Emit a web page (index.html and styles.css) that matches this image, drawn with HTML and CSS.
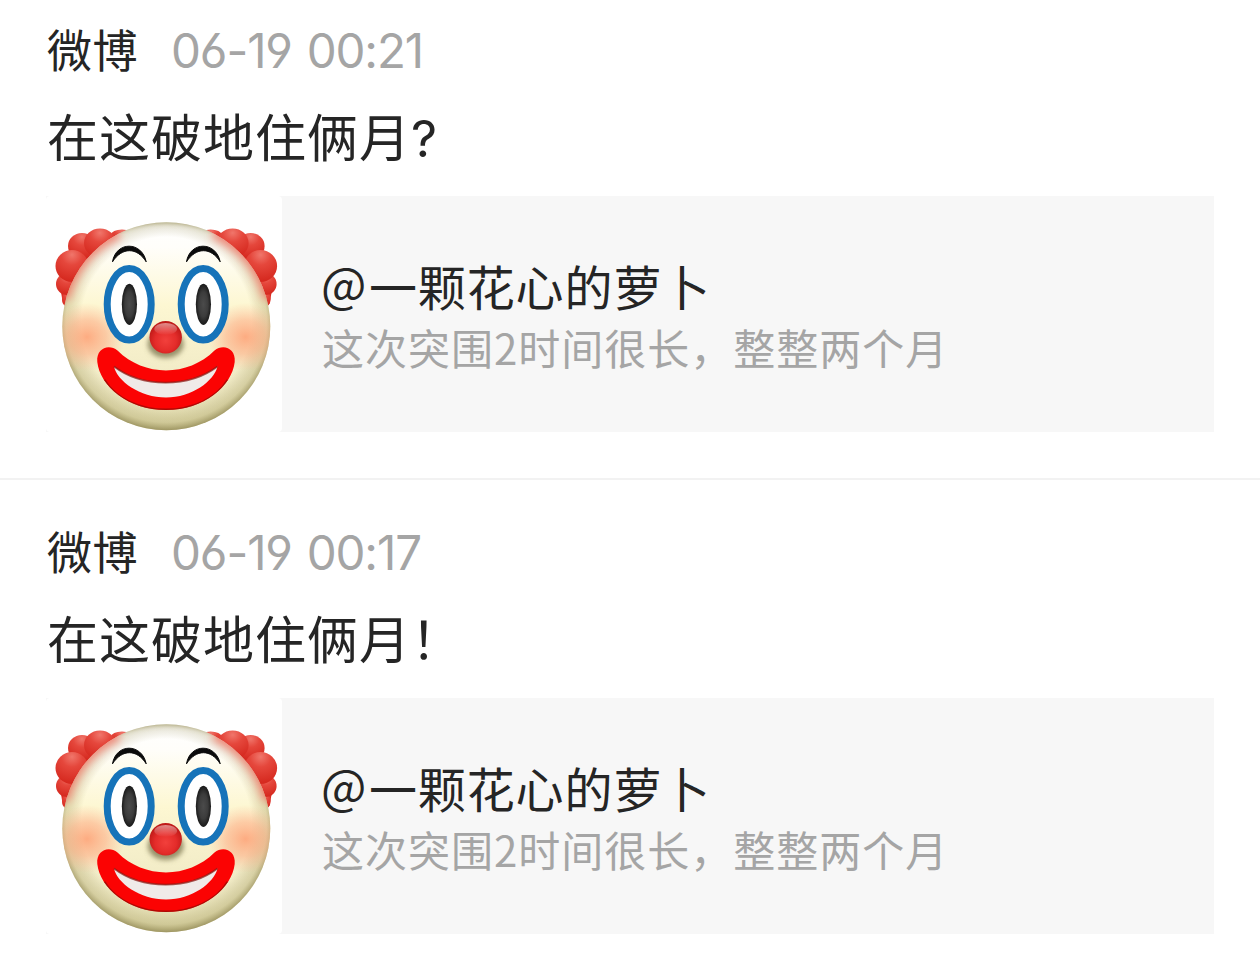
FILE: index.html
```
<!DOCTYPE html>
<html lang="zh-CN">

<head>
    <meta charset="UTF-8">
    <meta name="viewport" content="width=device-width, initial-scale=1.0">
    <title>微博</title>
    <link rel="stylesheet" href="styles.css">
</head>

<body>
    <!-- Shared clown avatar -->
    <svg class="defs" width="0" height="0" aria-hidden="true">
        <defs>
            <linearGradient id="skin" x1="0" y1="0" x2="0" y2="1">
                <stop offset="0" stop-color="#ffffff"/>
                <stop offset="0.12" stop-color="#fffefa"/>
                <stop offset="0.4" stop-color="#fdf7d2"/>
                <stop offset="0.75" stop-color="#f1ebc6"/>
                <stop offset="1" stop-color="#e4deb0"/>
            </linearGradient>
            <radialGradient id="rim" gradientUnits="userSpaceOnUse" cx="120.3" cy="126" r="109">
                <stop offset="0.78" stop-color="#8d8350" stop-opacity="0"/>
                <stop offset="0.92" stop-color="#a0975c" stop-opacity="0.32"/>
                <stop offset="1" stop-color="#857c48" stop-opacity="0.8"/>
            </radialGradient>
            <radialGradient id="blush">
                <stop offset="0" stop-color="#ff9468" stop-opacity="0.75"/>
                <stop offset="0.5" stop-color="#ffa27a" stop-opacity="0.5"/>
                <stop offset="1" stop-color="#ffb08c" stop-opacity="0"/>
            </radialGradient>
            <radialGradient id="curl" cx="0.5" cy="0.15" r="0.8">
                <stop offset="0" stop-color="#f0766b"/>
                <stop offset="0.4" stop-color="#e5473c"/>
                <stop offset="1" stop-color="#d62a20"/>
            </radialGradient>
            <radialGradient id="nose" cx="0.5" cy="0.6" r="0.55">
                <stop offset="0" stop-color="#f2403c"/>
                <stop offset="0.6" stop-color="#e42c2a"/>
                <stop offset="1" stop-color="#c01a18"/>
            </radialGradient>
            <linearGradient id="shine" x1="0" y1="0" x2="0" y2="1">
                <stop offset="0" stop-color="#fff" stop-opacity="0.5"/>
                <stop offset="1" stop-color="#fff" stop-opacity="0"/>
            </linearGradient>
            <radialGradient id="pupil">
                <stop offset="0" stop-color="#4b4b4b"/>
                <stop offset="0.6" stop-color="#3c3c3c"/>
                <stop offset="1" stop-color="#191919"/>
            </radialGradient>
            <filter id="soft" x="-30%" y="-60%" width="160%" height="220%">
                <feGaussianBlur stdDeviation="2.5"/>
            </filter>
            <filter id="glow" x="-40%" y="-40%" width="180%" height="180%">
                <feGaussianBlur stdDeviation="4"/>
            </filter>
            <clipPath id="faceClip">
                <circle cx="120.3" cy="130.2" r="104"/>
            </clipPath>
            <g id="hair" fill="url(#curl)">
                <path d="M17 108L14 90L20 62L46 42L84 36L70 54L36 92Z" fill="#d92c22"/>
                <ellipse cx="22" cy="103" rx="6" ry="8"/>
                <circle cx="21" cy="88" r="11"/>
                <ellipse cx="76" cy="39" rx="11" ry="5.5"/>
                <ellipse cx="36" cy="50" rx="14" ry="13"/>
                <ellipse cx="54" cy="47" rx="16" ry="14.5"/>
                <ellipse cx="26" cy="70" rx="16.5" ry="16"/>
            </g>
            <g id="eye">
                <ellipse cx="83.2" cy="108.3" rx="22" ry="35.7" fill="#fff" stroke="#1673b9" stroke-width="7"/>
                <ellipse cx="83.4" cy="108.3" rx="7.6" ry="20.6" fill="url(#pupil)"/>
                <path d="M66.500 65.800C70 45 96 45 100.200 65.800C91 51 76 51 66.500 65.800Z" fill="#0b0b0b" stroke="#0b0b0b" stroke-width="1" stroke-linejoin="round"/>
            </g>
            <path id="lips" d="M71.5 154.5C98 181 142 181 168.5 154.5C177 147.5 190 152 188.7 166C186 190 158 214 120 214C82 214 54 190 51.3 166C50 152 63 147.5 71.5 154.5Z"/>
            <clipPath id="lipsClip">
                <use href="#lips"/>
            </clipPath>
            <symbol id="clown" viewBox="0 0 236 236">
                <use href="#hair"/>
                <use href="#hair" transform="translate(240.6 0) scale(-1 1)"/>
                <circle cx="120.3" cy="130.2" r="104" fill="url(#skin)"/>
                <circle cx="120.3" cy="130.2" r="104" fill="url(#rim)"/>
                <g clip-path="url(#faceClip)">
                    <path d="M70 32Q120 14 170 32" fill="none" stroke="#8f864e" stroke-opacity="0.85" stroke-width="7" filter="url(#soft)"/>
                    <path d="M17 102C26 70 46 48 72 36" fill="none" stroke="#f57468" stroke-opacity="0.8" stroke-width="13" filter="url(#glow)"/>
                    <path d="M223.6 102C214.6 70 194.6 48 168.6 36" fill="none" stroke="#f57468" stroke-opacity="0.8" stroke-width="13" filter="url(#glow)"/>
                    <ellipse cx="41" cy="141" rx="38" ry="34" fill="url(#blush)"/>
                    <ellipse cx="199.6" cy="141" rx="38" ry="34" fill="url(#blush)"/>
                </g>
                <use href="#eye"/>
                <use href="#eye" x="74"/>
                <ellipse cx="119.7" cy="148" rx="18" ry="14" fill="#77704a" fill-opacity="0.75" filter="url(#soft)"/>
                <circle cx="119.7" cy="141.3" r="16.2" fill="url(#nose)"/>
                <ellipse cx="119.7" cy="133" rx="11.5" ry="6" fill="url(#shine)"/>
                <use href="#lips" fill="#fb0303"/>
                <path d="M58 184C70 204 95 214 120 214C145 214 170 204 182 184" fill="none" stroke="#8c0d06" stroke-opacity="0.7" stroke-width="3" clip-path="url(#lipsClip)"/>
                <path d="M68 170.5C96 192 143 192 171.5 170.5C168 185 146 201.5 120 201.5C94 201.5 71 185 68 170.5Z" fill="#f0eae8"/>
                <path d="M68 170.5C96 192 143 192 171.5 170.5" fill="none" stroke="#8b1712" stroke-opacity="0.75" stroke-width="1.6"/>
            </symbol>
        </defs>
    </svg>

    <div class="feed">
        <div class="post">
            <div class="meta">
                <span class="source">微博</span>
                <span class="time">06-19 00:21</span>
            </div>
            <p class="content">在这破地住俩月<span class="mark">?</span></p>
            <div class="card">
                <svg class="avatar"><use href="#clown"/></svg>
                <div class="card-text">
                    <div class="name"><span class="at">@</span>一颗花心的萝卜</div>
                    <div class="summary">这次突围2时间很长，整整两个月</div>
                </div>
            </div>
        </div>

        <div class="post">
            <div class="meta">
                <span class="source">微博</span>
                <span class="time">06-19 00:17</span>
            </div>
            <p class="content">在这破地住俩月！</p>
            <div class="card">
                <svg class="avatar"><use href="#clown"/></svg>
                <div class="card-text">
                    <div class="name"><span class="at">@</span>一颗花心的萝卜</div>
                    <div class="summary">这次突围2时间很长，整整两个月</div>
                </div>
            </div>
        </div>
    </div>
</body>

</html>
```
FILE: styles.css
```
* {
    box-sizing: border-box;
}

body {
    margin: 0;
    background-color: #fff;
    color: #252525;
    font-family: "Noto Sans CJK SC", sans-serif;
    overflow: hidden;
}

.defs {
    position: absolute;
}

.post {
    height: 502px;
    padding: 20px 46px 0;
}

.post:first-child {
    height: 480px;
    border-bottom: 2px solid #f2f2f2;
}

.post:last-child {
    padding-top: 42px;
}

.meta {
    display: flex;
    align-items: center;
    height: 60px;
    padding-left: 1px;
    white-space: nowrap;
}

.source {
    width: 124px;
    padding-bottom: 3px;
    font-size: 45px;
    letter-spacing: 0.5px;
}

.time {
    font-family: Inter, sans-serif;
    font-size: 47.5px;
    font-weight: 400;
    font-feature-settings: "cv03", "cv04", "ss01";
    letter-spacing: -1.1px;
    word-spacing: 2.5px;
    color: #a5a5a5;
}

.content {
    height: 72px;
    margin: 19px 0 25px;
    padding-left: 1px;
    font-size: 51px;
    line-height: 72px;
    letter-spacing: 1px;
}

.content .mark {
    font-family: Inter, sans-serif;
}

.card {
    display: flex;
    height: 236px;
    background-color: #f7f7f7;
}

.avatar {
    width: 236px;
    height: 236px;
    background-color: #fff;
    border-radius: 4px;
}

.card-text {
    padding: 57px 0 0 40px;
    white-space: nowrap;
}

.name {
    height: 64px;
    font-size: 48px;
    line-height: 64px;
    letter-spacing: 0.9px;
}

.name .at {
    position: relative;
    top: -3px;
    left: -1px;
    letter-spacing: 1.5px;
}

.summary {
    height: 60px;
    font-size: 42px;
    line-height: 60px;
    letter-spacing: 1px;
    color: #a5a5a5;
}
```
